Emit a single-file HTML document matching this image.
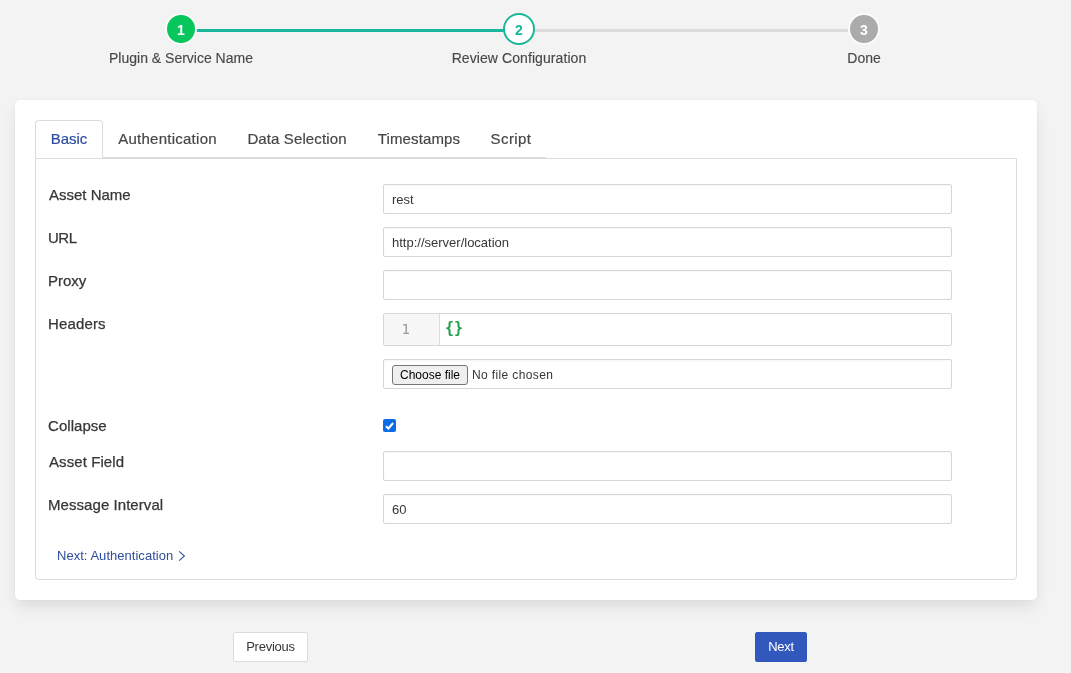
<!DOCTYPE html>
<html lang="en">
<head>
<meta charset="utf-8">
<title>Review Configuration</title>
<style>
*{box-sizing:border-box;margin:0;padding:0}
html,body{width:1071px;height:673px;overflow:hidden}
body{background:#f3f3f3;font-family:"Liberation Sans",sans-serif;color:#363636;position:relative;-webkit-font-smoothing:antialiased}
#root{position:absolute;left:0;top:0;width:1071px;height:673px;will-change:transform}
.abs{position:absolute}
/* steps */
.seg{position:absolute;top:29px;height:3px}
.seg.done{left:196px;width:309px;background:#18b79b}
.seg.todo{left:534px;width:316px;background:#dbdbdb}
.marker{position:absolute;border-radius:50%;width:32px;height:32px;top:13px;text-align:center;font-weight:700;font-size:14px;line-height:30px;border:2.4px solid #fbfbfb;color:#fff}
.m1{left:165px;background:#06c65c}
.m2{left:503px;background:#fff;border-color:#18b79b;color:#18b79b}
.m3{left:848px;background:#ababab}
.stitle{position:absolute;top:49px;width:240px;text-align:center;font-size:14px;line-height:18px;color:#484848;white-space:nowrap;-webkit-text-stroke:.15px currentColor}
/* card */
.card{position:absolute;left:15px;top:100px;width:1022px;height:500px;background:#fff;border-radius:5px;box-shadow:0 8px 16px -2px rgba(10,10,10,.1),0 0 0 1px rgba(10,10,10,.02)}
.tabs{position:absolute;left:35px;top:120px;height:38px;width:511px;border-bottom:1px solid #dbdbdb;display:flex;list-style:none}
.tabs li{font-size:15px;line-height:20px;padding:8px 0 0 0;height:37px;border:1px solid transparent;border-bottom:0;white-space:nowrap;color:#464646;text-align:center;-webkit-text-stroke:.2px currentColor}
.tabs li.act{color:#2f4d9e;border-color:#dbdbdb;border-radius:4px 4px 0 0;background:#fff;height:38px}
.panel{position:absolute;left:35px;top:158px;width:982px;height:422px;border:1px solid #dbdbdb;border-radius:0 0 4px 4px}
.lbl{position:absolute;left:48px;font-size:15px;line-height:20px;color:#363636;white-space:nowrap;-webkit-text-stroke:.25px #363636}
.inp{position:absolute;left:383px;width:569px;height:30px;border:1px solid #d6d6d6;border-radius:2px;background:#fff;font-size:13px;line-height:30px;padding-left:8px;color:#363636;box-shadow:inset 0 1px 2px rgba(10,10,10,.04);white-space:nowrap}
.code{position:absolute;left:383px;top:313px;width:569px;height:33px;border:1px solid #d6d6d6;border-radius:2px;background:#fff;font-family:"DejaVu Sans Mono","Liberation Mono",monospace;font-size:14px}
.gut{position:absolute;left:0;top:0;width:56px;height:31px;background:#f7f7f7;border-right:1px solid #ddd;color:#999;font-size:14px;line-height:31px;text-align:right;padding-right:29px}
.src{position:absolute;left:61px;top:-1px;font-size:15px;line-height:30px;color:#1fa045;font-weight:700}
.fbtn{position:absolute;left:8px;top:5px;width:76px;height:20px;border:1px solid #767676;border-radius:3px;background:#efefef;font-size:12px;line-height:18px;text-align:center;color:#000}
.fno{position:absolute;left:88px;top:0;font-size:12px;letter-spacing:.37px;color:#363636}
.chk{position:absolute;left:383px;top:419px;width:13px;height:13px;border-radius:2px;background:#0c6ce6}
.nextlink{position:absolute;left:57px;top:547px;font-size:13px;line-height:18px;color:#2f4d9e;white-space:nowrap;letter-spacing:.03px}
.btn{position:absolute;top:632px;height:30px;border-radius:2px;font-size:13px;line-height:28px;text-align:center;border:1px solid #dbdbdb;background:#fff;color:#363636}
.btn.prev{left:233px;width:75px;letter-spacing:-.25px}
.btn.next{left:755px;width:52px;background:#3257bd;border-color:#3257bd;color:#fff;letter-spacing:-.3px}
</style>
</head>
<body>
<div id="root">
<div class="seg done"></div>
<div class="seg todo"></div>
<div class="marker m1">1</div>
<div class="marker m2">2</div>
<div class="marker m3">3</div>
<div class="stitle" style="left:61px">Plugin &amp; Service Name</div>
<div class="stitle" style="left:399px;letter-spacing:.08px">Review Configuration</div>
<div class="stitle" style="left:744px">Done</div>

<div class="card"></div>
<div class="panel"></div>
<ul class="tabs">
  <li class="act" style="width:68px">Basic</li>
  <li style="width:129px;letter-spacing:.26px">Authentication</li>
  <li style="width:130px;letter-spacing:.12px">Data Selection</li>
  <li style="width:114px;letter-spacing:.13px">Timestamps</li>
  <li style="width:70px;letter-spacing:.44px">Script</li>
</ul>

<div class="lbl" style="top:185px;left:49px">Asset Name</div>
<div class="inp" style="top:184px">rest</div>
<div class="lbl" style="top:228px;letter-spacing:-.5px">URL</div>
<div class="inp" style="top:227px">http://server/location</div>
<div class="lbl" style="top:271px">Proxy</div>
<div class="inp" style="top:270px"></div>
<div class="lbl" style="top:314px;letter-spacing:.15px">Headers</div>
<div class="code"><div class="gut">1</div><div class="src">{}</div></div>
<div class="inp" style="top:359px"><span class="fbtn">Choose file</span><span class="fno">No file chosen</span></div>
<div class="lbl" style="top:416px;letter-spacing:.05px">Collapse</div>
<div class="chk"><svg width="13" height="13" viewBox="0 0 13 13"><path d="M2.9 6.2 L5.4 8.5 L10.1 3" fill="none" stroke="#fff" stroke-width="2" stroke-linecap="butt" stroke-linejoin="miter"/></svg></div>
<div class="lbl" style="top:452px;left:49px;letter-spacing:.08px">Asset Field</div>
<div class="inp" style="top:451px"></div>
<div class="lbl" style="top:495px;letter-spacing:.06px">Message Interval</div>
<div class="inp" style="top:494px">60</div>

<div class="nextlink">Next: Authentication</div>
<svg class="abs" style="left:178px;top:550px" width="8" height="12" viewBox="0 0 8 12"><path d="M1.2 1.4 L6.4 6 L1.2 10.6" fill="none" stroke="#2f4d9e" stroke-width="1.1"/></svg>

<div class="btn prev">Previous</div>
<div class="btn next">Next</div>
</div>
</body>
</html>
